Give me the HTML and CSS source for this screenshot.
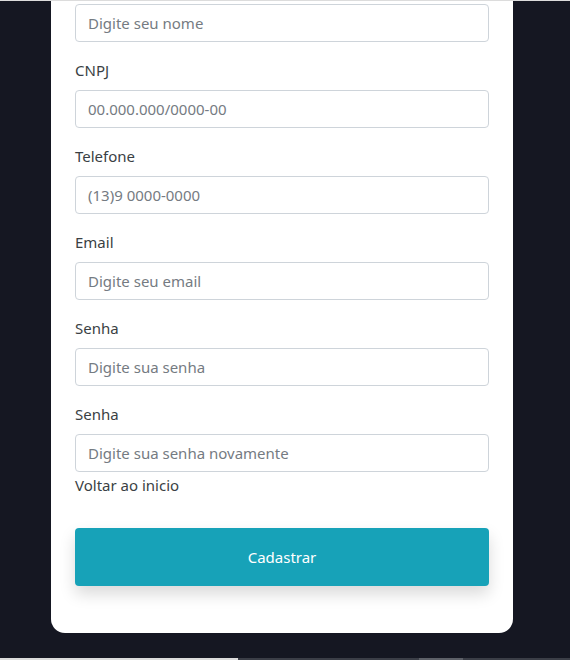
FILE: index.html
```html
<!DOCTYPE html>
<html lang="pt-BR">
<head>
<meta charset="utf-8">
<link rel="stylesheet" href="styles.css">
</head>
<body>
<div class="topline"></div>
<main class="page">
  <form class="card">
    <div class="group first">
      <input class="field" type="text" placeholder="Digite seu nome">
    </div>
    <div class="group">
      <label class="label">CNPJ</label>
      <input class="field" type="text" placeholder="00.000.000/0000-00">
    </div>
    <div class="group">
      <label class="label">Telefone</label>
      <input class="field" type="text" placeholder="(13)9 0000-0000">
    </div>
    <div class="group">
      <label class="label">Email</label>
      <input class="field" type="text" placeholder="Digite seu email">
    </div>
    <div class="group">
      <label class="label">Senha</label>
      <input class="field" type="password" placeholder="Digite sua senha">
    </div>
    <div class="group">
      <label class="label">Senha</label>
      <input class="field" type="password" placeholder="Digite sua senha novamente">
    </div>
    <a class="back" href="#">Voltar ao inicio</a>
    <button class="submit" type="button">Cadastrar</button>
  </form>
</main>
<div class="bottombar">
  <span class="seg light"></span>
  <span class="seg dark"></span>
  <span class="seg thumb"></span>
  <span class="seg dark2"></span>
</div>
</body>
</html>
```
FILE: styles.css
```css
* { box-sizing: border-box; }
html, body { margin: 0; padding: 0; }
body {
  background: #151722;
  font-family: "Noto Sans", "Open Sans", sans-serif;
  font-size: 15px;
  color: #212529;
  height: 660px;
  overflow: hidden;
  display: flex;
  flex-direction: column;
}
.topline { height: 1px; background: #dcdcdc; flex: none; }
.page {
  flex: 1;
  display: flex;
  justify-content: center;
  padding-left: 51px;
  padding-right: 57px;
}
.card {
  width: 462px;
  height: 632px;
  background: #fff;
  border-radius: 0 0 14px 14px;
  padding: 3px 24px 0 24px;
  display: flex;
  flex-direction: column;
}
.group { margin-top: 16px; display: flex; flex-direction: column; }
.group.first { margin-top: 0; }
.label { line-height: 24px; margin-bottom: 8px; color: #3a3f44; }
.field {
  height: 38px;
  width: 100%;
  border: 1px solid #ced4da;
  border-radius: 4px;
  padding: 0 12px;
  font: inherit;
  color: #495057;
}
.field::placeholder { color: #757b82; }
.back {
  line-height: 24px;
  margin-top: 1px;
  color: #3a3f44;
  text-decoration: none;
}
.submit {
  margin-top: 31px;
  height: 58px;
  border: none;
  border-radius: 4px;
  background: #17a2b8;
  color: #fff;
  font: inherit;
  box-shadow: 0 8px 16px rgba(0,0,0,0.15);
}
.bottombar { height: 2px; display: flex; flex: none; }
.seg { display: block; height: 2px; }
.light { width: 238px; background: #dcdcdc; }
.dark { width: 181px; background: #3b3e47; }
.thumb { width: 44px; background: #5d6068; }
.dark2 { flex: 1; background: #3b3e47; }
```
